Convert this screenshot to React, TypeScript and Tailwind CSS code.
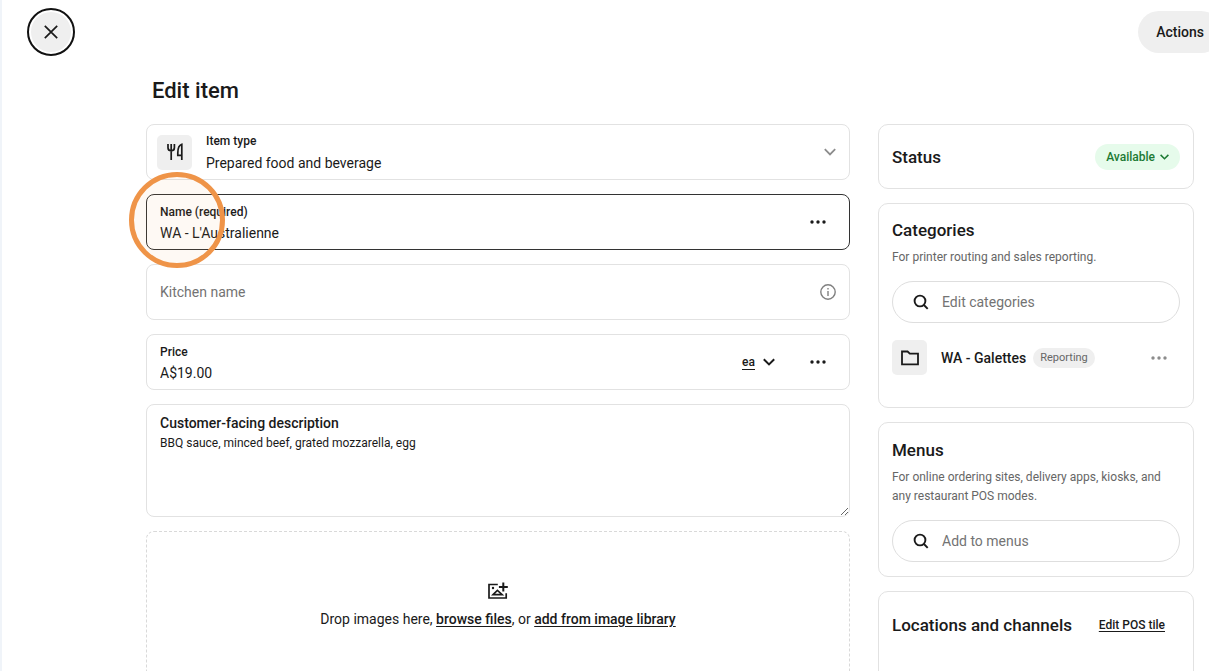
import React, { useState } from 'react';

function CloseIcon() {
  return (
    <svg className="h-4 w-4" viewBox="0 0 16 16" fill="none" stroke="currentColor" strokeWidth="1.7" aria-hidden="true">
      <path d="M1.8 1.8l12.4 12.4M14.2 1.8L1.8 14.2" />
    </svg>
  );
}

function ChevronIcon({ className }: { className: string }) {
  return (
    <svg className={`pointer-events-none shrink-0 ${className}`} viewBox="0 0 12 8" fill="none" stroke="currentColor" aria-hidden="true">
      <path d="M.8 1.2L6 6.400l5.200-5.200" />
    </svg>
  );
}

function DotsIcon() {
  return (
    <svg className="h-4 w-4" viewBox="0 0 16 16" fill="currentColor" aria-hidden="true">
      <circle cx="2" cy="8" r="1.7" />
      <circle cx="8" cy="8" r="1.7" />
      <circle cx="14" cy="8" r="1.7" />
    </svg>
  );
}

function CutleryIcon() {
  return (
    <svg className="h-[18px] w-4" viewBox="0 0 16 18" fill="none" stroke="currentColor" strokeWidth="1.7" aria-hidden="true">
      <path d="M1 1v3.800c0 1.900 1.200 3 3.200 3s3.200-1.100 3.200-3V1M4.200 1v16" />
      <path d="M14.800 17V1.300c-2.500.8-4 4.200-4 8.700v2.300h4" />
    </svg>
  );
}

function InfoIcon() {
  return (
    <svg className="h-4 w-4" viewBox="0 0 16 16" fill="none" stroke="currentColor" strokeWidth="1.4" aria-hidden="true">
      <circle cx="8" cy="8" r="7.200" />
      <path d="M8 7v5" />
      <path d="M8 4v1.600" />
    </svg>
  );
}

function SearchIcon() {
  return (
    <svg className="h-4 w-4 shrink-0" viewBox="0 0 16 16" fill="none" stroke="currentColor" strokeWidth="1.9" aria-hidden="true">
      <circle cx="7" cy="7" r="5.400" />
      <path d="M10.900 11l3.800 3.800" />
    </svg>
  );
}

function FolderIcon() {
  return (
    <svg className="h-4 w-[18px]" viewBox="0 0 18 16" fill="none" stroke="currentColor" strokeWidth="1.8" aria-hidden="true">
      <path d="M1 1.500h5.600l2.200 2.200H17v10.600H1z" />
    </svg>
  );
}

function AddImageIcon() {
  return (
    <svg className="h-[18px] w-5" viewBox="0 0 20 18" fill="none" stroke="currentColor" strokeWidth="1.700" aria-hidden="true">
      <path d="M9.800 2.500H1v13.500h17.200v-4.800" />
      <path d="M15.300 .5v9M10.900 5h8.900" strokeWidth="2" />
      <path d="M5 12.600l4.400-4.200 4.800 4.200z" strokeWidth="1.600" />
      <circle cx="5" cy="6" r="1.200" fill="currentColor" stroke="none" />
    </svg>
  );
}

interface CardProps {
  title: string;
  description?: string;
  action?: React.ReactNode;
  className: string;
  children?: React.ReactNode;
}

function SideCard({ title, description, action, className, children }: CardProps) {
  return (
    <section className={`rounded-[10px] border border-[#e2e2e2] px-[13px] ${className}`}>
      <div className="flex items-center justify-between">
        <h2 className="text-[17px] leading-6 font-medium">{title}</h2>
        {action}
      </div>
      {description && <p className="mt-[6px] text-xs leading-[19px] text-[#666]">{description}</p>}
      {children}
    </section>
  );
}

function SearchBox({ label }: { label: string }) {
  return (
    <label className="mt-[14px] flex h-[42px] items-center gap-[13px] rounded-full border border-[#dedede] px-5">
      <SearchIcon />
      <input
        type="search"
        aria-label={label}
        placeholder={label}
        className="w-full min-w-0 bg-transparent text-sm leading-5 outline-none placeholder:text-[#737373]"
      />
    </label>
  );
}

export default function App() {
  const [name, setName] = useState("WA - L'Australienne");
  const [kitchenName, setKitchenName] = useState('');
  const [price, setPrice] = useState('A$19.00');
  const [description, setDescription] = useState('BBQ sauce, minced beef, grated mozzarella, egg');

  return (
    <div className="h-screen overflow-hidden border-l-2 border-[#f0f4f9] bg-white font-[Roboto,'Liberation_Sans',sans-serif] text-[#1a1a1a]">
      <header className="flex h-16 items-center justify-between pl-[25px]">
        <button
          type="button"
          aria-label="Close"
          className="flex h-12 w-12 items-center justify-center rounded-full border-2 border-[#111] bg-[#efefef] ring-2 ring-white ring-inset"
        >
          <CloseIcon />
        </button>
        <button type="button" className="-mr-[13px] h-[42px] shrink-0 rounded-full bg-[#efefef] px-[18px] text-sm font-medium">
          Actions
        </button>
      </header>

      <main className="pr-[15px] pl-36">
        <h1 className="mb-[18px] pt-3 pl-[6px] text-[22px] leading-[30px] font-medium">Edit item</h1>

        <div className="grid grid-cols-[minmax(0,1fr)_316px] items-start gap-7">
          <form className="flex flex-col gap-[14px]">
            {/* Item type */}
            <div className="flex h-14 items-center gap-[14px] rounded-lg border border-[#e2e2e2] pr-[13px] pl-[10px]">
              <span className="flex h-[35px] w-[35px] items-center justify-center rounded-[5px] bg-[#efefef]">
                <CutleryIcon />
              </span>
              <div className="flex-1 pt-[2px]">
                <label htmlFor="item-type" className="block text-xs leading-5 font-medium">Item type</label>
                <select id="item-type" className="block w-full appearance-none bg-transparent text-sm leading-6 outline-none">
                  <option>Prepared food and beverage</option>
                </select>
              </div>
              <ChevronIcon className="h-2 w-3 stroke-[1.8] text-[#8c8c8c]" />
            </div>

            {/* Name */}
            <div className="relative flex h-14 items-center rounded-lg border border-[#333] pr-[23px] pl-[13px]">
              <div className="flex-1 pt-[2px]">
                <label htmlFor="name" className="block text-xs leading-5 font-medium">Name (required)</label>
                <input
                  id="name"
                  type="text"
                  required
                  value={name}
                  onChange={(e) => setName(e.target.value)}
                  className="block w-full text-sm leading-[22px] outline-none"
                />
              </div>
              <button type="button" aria-label="Name options">
                <DotsIcon />
              </button>
              <span className="pointer-events-none absolute -top-[23px] -left-[18px] z-10 h-24 w-24 rounded-full border-[5px] border-[#ef9448] bg-[#ef9448]/6" />
            </div>

            {/* Kitchen name */}
            <div className="flex h-14 items-center rounded-lg border border-[#e2e2e2] px-[13px]">
              <input
                type="text"
                aria-label="Kitchen name"
                placeholder="Kitchen name"
                value={kitchenName}
                onChange={(e) => setKitchenName(e.target.value)}
                className="block w-full flex-1 text-sm leading-6 outline-none placeholder:text-[#737373]"
              />
              <button type="button" aria-label="About kitchen name" className="text-[#808080]">
                <InfoIcon />
              </button>
            </div>

            {/* Price */}
            <div className="flex h-14 items-center rounded-lg border border-[#e2e2e2] pr-[23px] pl-[13px]">
              <div className="flex-1 pt-[2px]">
                <label htmlFor="price" className="block text-xs leading-5 font-medium">Price</label>
                <input
                  id="price"
                  type="text"
                  value={price}
                  onChange={(e) => setPrice(e.target.value)}
                  className="block w-full text-sm leading-[22px] outline-none"
                />
              </div>
              <div className="mr-[35px] flex items-center gap-2">
                <select
                  aria-label="Unit"
                  className="field-sizing-content appearance-none border-b border-[#1a1a1a] bg-transparent text-xs leading-[14px] font-medium outline-none"
                >
                  <option>ea</option>
                </select>
                <ChevronIcon className="h-2 w-3 stroke-2" />
              </div>
              <button type="button" aria-label="Price options">
                <DotsIcon />
              </button>
            </div>

            {/* Description */}
            <div className="flex h-[113px] flex-col rounded-lg border border-[#e2e2e2] pt-2">
              <label htmlFor="description" className="px-[13px] text-sm leading-5 font-medium">
                Customer-facing description
              </label>
              <textarea
                id="description"
                value={description}
                onChange={(e) => setDescription(e.target.value)}
                className="block w-full flex-1 rounded-b-lg px-[13px] text-xs leading-[21px] outline-none"
              />
            </div>

            {/* Image upload */}
            <div className="flex h-44 flex-col items-center rounded-lg border border-dashed border-[#d9d9d9] pt-[50px]">
              <AddImageIcon />
              <p className="mt-[9px] text-sm leading-5">
                Drop images here,{' '}
                <button type="button" className="font-medium underline underline-offset-2">browse files</button>, or{' '}
                <button type="button" className="font-medium underline underline-offset-2">add from image library</button>
              </p>
            </div>
          </form>

          <aside className="flex flex-col gap-[14px]">
            <SideCard
              title="Status"
              className="h-[65px] pt-[19px]"
              action={
                <div className="flex h-[26px] items-center gap-[5px] rounded-full bg-[#e6fbeb] px-[11px] text-[#1c7a33]">
                  <select
                    aria-label="Status"
                    className="field-sizing-content appearance-none bg-transparent text-xs leading-5 font-medium outline-none"
                  >
                    <option>Available</option>
                  </select>
                  <ChevronIcon className="h-[6px] w-[9px] stroke-2" />
                </div>
              }
            />

            <SideCard title="Categories" description="For printer routing and sales reporting." className="h-[205px] pt-[14px]">
              <SearchBox label="Edit categories" />
              <div className="mt-[17px] flex items-center">
                <span className="mr-[14px] flex h-[35px] w-[35px] items-center justify-center rounded-[5px] bg-[#efefef]">
                  <FolderIcon />
                </span>
                <span className="text-sm leading-5 font-medium">WA - Galettes</span>
                <span className="ml-[7px] rounded-full bg-[#efefef] px-[7px] text-[11px] leading-5 text-[#666]">Reporting</span>
                <button type="button" aria-label="Category options" className="mr-[13px] ml-auto text-[#8c8c8c]">
                  <DotsIcon />
                </button>
              </div>
            </SideCard>

            <SideCard
              title="Menus"
              description="For online ordering sites, delivery apps, kiosks, and any restaurant POS modes."
              className="h-[155px] pt-[15px]"
            >
              <SearchBox label="Add to menus" />
            </SideCard>

            <SideCard
              title="Locations and channels"
              className="h-[130px] pt-[21px]"
              action={
                <a href="#pos-tile" className="mr-[15px] text-xs leading-5 font-medium underline underline-offset-2">
                  Edit POS tile
                </a>
              }
            />
          </aside>
        </div>
      </main>
    </div>
  );
}
